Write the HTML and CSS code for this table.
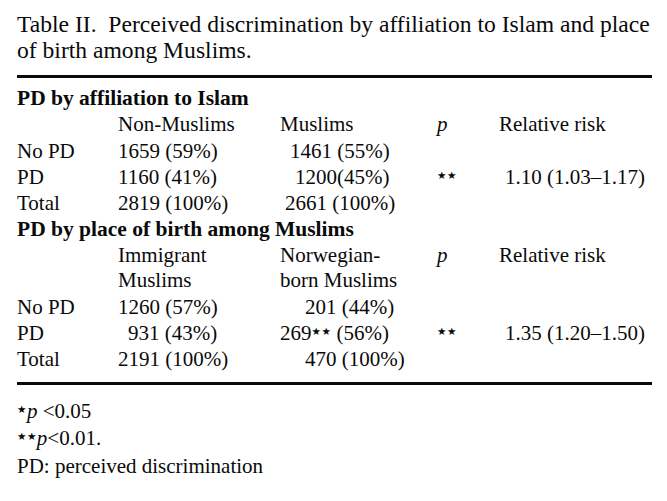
FILE: index.html
```html
<!DOCTYPE html>
<html lang="en">
<head>
<meta charset="utf-8">
<title>Table II</title>
<link rel="stylesheet" href="styles.css">
</head>
<body>
<div class="page">
  <p class="caption">Table II.&nbsp; Perceived discrimination by affiliation to Islam and place of birth among Muslims.</p>
  <div class="rule top"></div>
  <table class="data">
    <colgroup>
      <col class="c-label">
      <col class="c-a">
      <col class="c-b">
      <col class="c-p">
      <col class="c-rr">
    </colgroup>
    <tbody>
      <tr><th class="group" colspan="5">PD by affiliation to Islam</th></tr>
      <tr class="head"><td></td><td>Non-Muslims</td><td>Muslims</td><td><i class="p">p</i></td><td>Relative risk</td></tr>
      <tr><td>No PD</td><td>1659 (59%)</td><td><span class="in10">1461 (55%)</span></td><td></td><td></td></tr>
      <tr><td>PD</td><td>1160 (41%)</td><td><span class="in14">1200(45%)</span></td><td><span class="stars">★★</span></td><td><span class="in6">1.10 (1.03–1.17)</span></td></tr>
      <tr><td>Total</td><td>2819 (100%)</td><td><span class="in5">2661 (100%)</span></td><td></td><td></td></tr>
      <tr><th class="group" colspan="5">PD by place of birth among Muslims</th></tr>
      <tr class="head two"><td></td><td>Immigrant<br>Muslims</td><td>Norwegian-<br>born Muslims</td><td><i class="p">p</i></td><td>Relative risk</td></tr>
      <tr><td>No PD</td><td>1260 (57%)</td><td><span class="in25">201 (44%)</span></td><td></td><td></td></tr>
      <tr><td>PD</td><td><span class="in10">931 (43%)</span></td><td>269<span class="stars">★★</span> (56%)</td><td><span class="stars">★★</span></td><td><span class="in6">1.35 (1.20–1.50)</span></td></tr>
      <tr><td>Total</td><td>2191 (100%)</td><td><span class="in25">470 (100%)</span></td><td></td><td></td></tr>
    </tbody>
  </table>
  <div class="rule bottom"></div>
  <div class="notes">
    <p><span class="stars">★</span><i class="p">p</i> &lt;0.05</p>
    <p><span class="stars">★★</span><i class="p">p</i>&lt;0.01.</p>
    <p>PD: perceived discrimination</p>
  </div>
</div>
</body>
</html>
```

FILE: styles.css
```css
html, body {
  margin: 0;
  padding: 0;
  background: #ffffff;
}

body {
  font-family: "Liberation Serif", "Times New Roman", serif;
  color: #0a0a0a;
}

.page {
  width: 635px;
  padding: 11px 15px 0 17px;
}

.caption {
  margin: 0;
  font-size: 23.6px;
  line-height: 26px;
}

.rule {
  height: 3px;
  background: #0a0a0a;
}

.rule.top {
  margin-top: 12px;
}

.rule.bottom {
  margin-top: 9px;
}

.data {
  border-collapse: collapse;
  width: 635px;
  table-layout: fixed;
  margin-top: 7px;
  font-size: 21px;
  line-height: 26.3px;
}

.c-label { width: 101px; }
.c-a { width: 162px; }
.c-b { width: 157px; }
.c-p { width: 62px; }
.c-rr { width: 153px; }

.data td, .data th {
  padding: 0;
  text-align: left;
  vertical-align: top;
  white-space: nowrap;
}

.data th.group {
  font-weight: bold;
  font-size: 21.5px;
}

.head.two td {
  line-height: 25px;
  padding-bottom: 1px;
}

.p {
  font-style: italic;
}

.stars {
  font-family: "DejaVu Sans", sans-serif;
  font-size: 10.5px;
  letter-spacing: 0.5px;
  vertical-align: 5px;
  line-height: 1;
}

.in5 { padding-left: 5px; }
.in6 { padding-left: 6px; }
.in10 { padding-left: 10px; }
.in14 { padding-left: 15px; }
.in25 { padding-left: 25px; }

.in5, .in6, .in10, .in14, .in25 {
  display: inline-block;
}

.notes {
  margin-top: 13px;
  font-size: 21px;
  line-height: 27.5px;
}

.notes p {
  margin: 0;
}
```
